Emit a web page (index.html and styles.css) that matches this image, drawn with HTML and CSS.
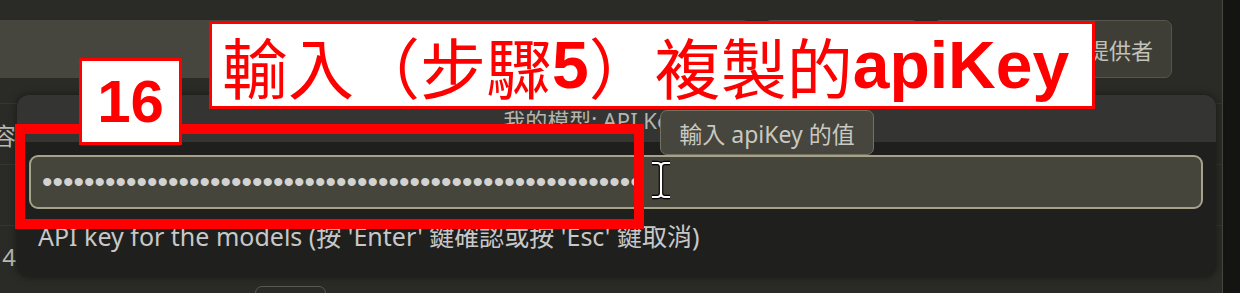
FILE: index.html
```html
<!DOCTYPE html>
<html lang="zh-Hant">
<head>
<meta charset="UTF-8"/>
<meta name="viewport" content="width=device-width,initial-scale=1.0"/>
<title>模型提供者</title>
<link rel="stylesheet" href="styles.css">
</head>
<body>

<div class="app">
  <div class="main">
    <div class="topbar"></div>
    <div class="toolbar">
      <div class="search"></div>
      <button class="btn btn-small">重新整理</button>
      <button class="btn btn-provider">新增模型提供者</button>
    </div>
    <div class="list">
      <div class="row"><span class="cell">內容</span></div>
      <div class="row"></div>
      <div class="row"><span class="cell">14</span></div>
      <div class="row last"><button class="btn btn-row"></button></div>
    </div>
  </div>
  <div class="edge"></div>
</div>

<!-- quick input -->
<div class="quick-input">
  <div class="qi-title">我的模型: API Key 設定</div>
  <div class="qi-body">
    <div class="qi-input">•••••••••••••••••••••••••••••••••••••••••••••••••••••••••</div>
    <div class="qi-message">API key for the models (按 'Enter' 鍵確認或按 'Esc' 鍵取消)</div>
  </div>
</div>
<div class="tooltip">輸入 apiKey 的值</div>

<!-- mouse cursor -->
<svg class="ibeam" width="24" height="40" viewBox="0 0 24 40">
  <path d="M3 3H8Q12 3 12 7V33Q12 37 8 37H3M21 3H16Q12 3 12 7M12 33Q12 37 16 37H21" fill="none" stroke="#000" stroke-width="4.5"/>
  <path d="M3 3H8Q12 3 12 7V33Q12 37 8 37H3M21 3H16Q12 3 12 7M12 33Q12 37 16 37H21" fill="none" stroke="#fff" stroke-width="2.2"/>
</svg>

<!-- annotations -->
<div class="mark-box"></div>
<div class="step-no">16</div>
<div class="callout">輸入（步驟<b>5</b>）複製的<b>apiKey</b></div>

</body>
</html>
```

FILE: styles.css
```css
*{box-sizing:border-box}
body{
  margin:0;width:1240px;height:293px;overflow:hidden;position:relative;
  background:#2a2a26;color:#ccc;
  font-family:"Noto Sans","Noto Sans CJK TC",sans-serif
}

/* ---------- app behind the popup ---------- */
.app{display:flex;height:293px;overflow:hidden}
.main{width:1222px;height:293px;overflow:hidden}
.edge{flex:1;border-left:1px solid #47473f;background:#141412}
.topbar{height:20px}
.toolbar{display:flex;gap:14px;height:58px;padding-right:50px}
.search{flex:1;background:#46463e;border-radius:0 7px 7px 0}
.btn{
  background:#3e3e37;border:1px solid #56554c;border-radius:7px;color:#c2c2ba;
  font:22px "Noto Sans","Noto Sans CJK TC",sans-serif;padding:0
}
.btn-small{width:155px}
.btn-provider{
  width:239px;display:flex;align-items:center;justify-content:flex-end;
  padding:0 18px;white-space:nowrap;overflow:hidden
}

.list{margin-top:25px}
.row{height:61px;border-top:1px solid #36362f;display:flex;align-items:center}
.row.last{border-top:0;align-items:flex-start;padding-left:255px}
.cell{
  width:16px;display:flex;justify-content:flex-end;overflow:hidden;white-space:nowrap;
  font-size:24px;color:#b9b9b1
}
.btn-row{width:71px;height:40px;background:transparent;border-color:#5a5a54}

/* ---------- quick input popup ---------- */
.quick-input{
  position:absolute;left:17px;top:95px;width:1199px;height:182px;
  background:#1f1f1d;border-radius:12px;overflow:hidden;
  box-shadow:0 0 8px rgba(0,0,0,.45)
}
.qi-title{
  height:47px;background:#343432;display:flex;align-items:center;justify-content:center;
  font-size:22px;color:#b5b5ad
}
.qi-body{padding:13px 13px 0 12px}
.qi-input{
  height:54px;border:2px solid #a6a28a;border-radius:9px;background:#45453c;
  display:flex;align-items:center;padding-left:11px;overflow:hidden;white-space:nowrap;
  font:30px "Liberation Sans",sans-serif;color:#d2d2d0
}
.qi-message{margin-top:12px;padding-left:9px;font-size:25px;line-height:30px;color:#c8c8c8}

.tooltip{
  position:absolute;left:660px;top:110px;width:214px;height:45px;
  background:#46453e;border:1px solid #737160;border-radius:7px;
  display:flex;align-items:center;justify-content:center;
  font-size:23px;color:#c9c9c1
}
.ibeam{position:absolute;left:649px;top:160px}

/* ---------- red annotations ---------- */
.mark-box{position:absolute;left:15px;top:124px;width:629px;height:105px;border:10px solid #f00}
.step-no{
  position:absolute;left:79px;top:58px;width:103px;height:87px;
  background:#fff;border:3px solid #f00;
  display:flex;align-items:center;justify-content:center;
  font:bold 60px "Liberation Sans",sans-serif;color:#f00
}
.callout{
  position:absolute;left:209px;top:21px;width:886px;height:88px;
  background:#fff;border:3px solid #f00;
  display:flex;align-items:center;padding-left:10px;white-space:nowrap;
  font:66px "Liberation Sans","Noto Sans CJK TC",sans-serif;color:#f00
}
.callout b{font-weight:bold}
```
